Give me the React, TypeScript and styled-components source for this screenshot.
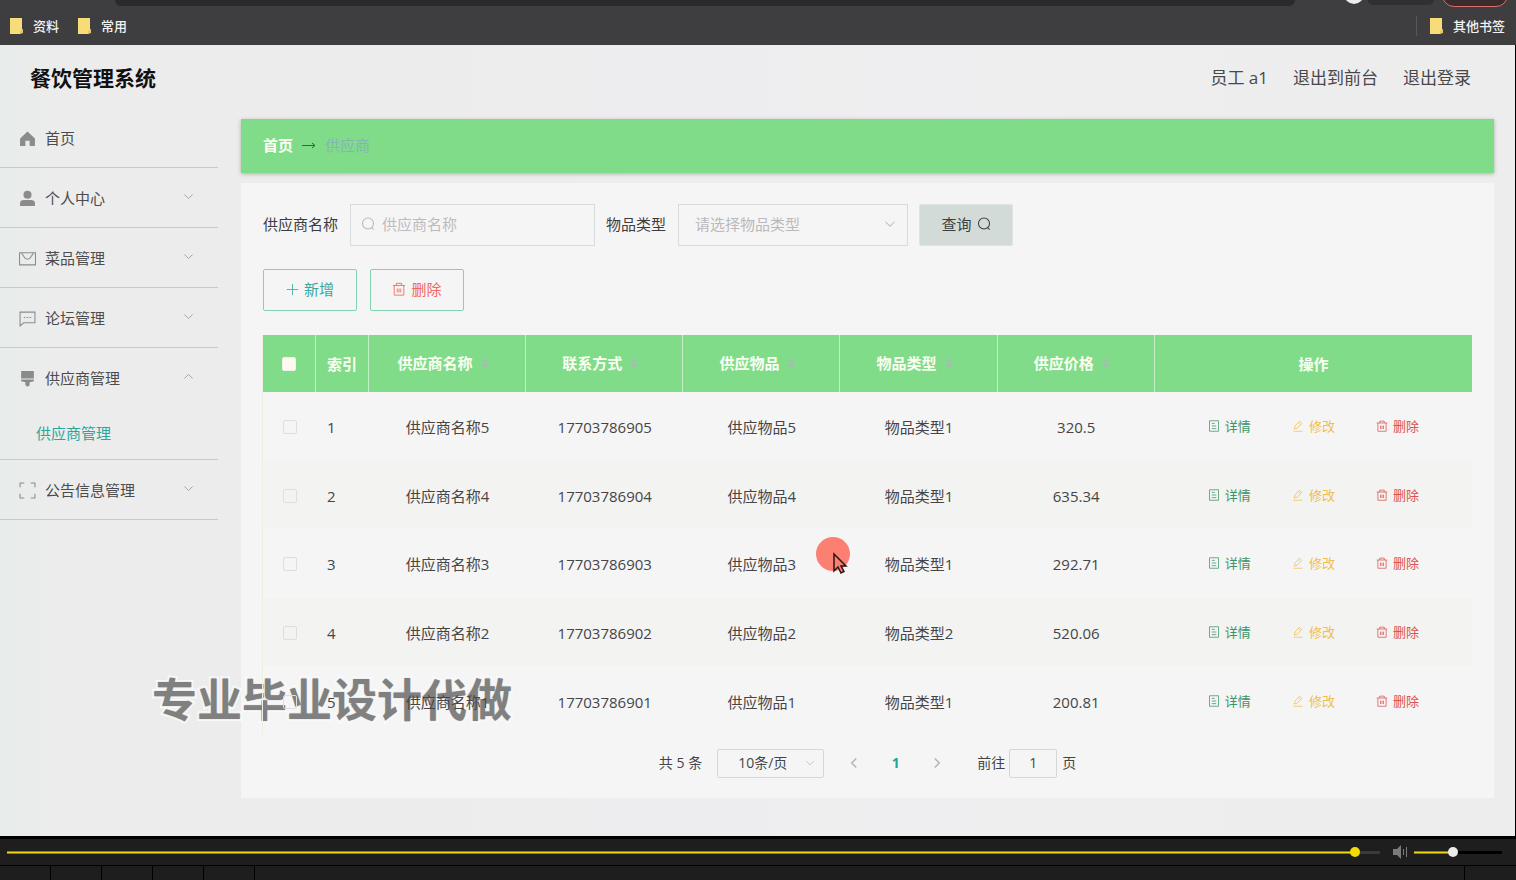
import React, { useState } from "react";
import styled, { createGlobalStyle, css } from "styled-components";

const GlobalStyle = createGlobalStyle`
  *, *::before, *::after { box-sizing: border-box; }
  body {
    margin: 0;
    background: #1e1e1e;
    color: #454547;
    font-family: "Open Sans", "Noto Sans CJK SC", sans-serif;
    font-size: 15px;
    line-height: 20px;
  }
  button, input, select { font: inherit; color: inherit; margin: 0; }
  a { color: inherit; text-decoration: none; }
`;

const Window = styled.div`
  display: flex;
  flex-direction: column;
  min-height: 100vh;
  overflow: hidden;
`;

/* browser chrome */
const TabStrip = styled.div`
  display: flex;
  align-items: flex-start;
  height: 8px;
  padding: 0 8px 0 115px;
  overflow: hidden;
  background: #3e3e40;
`;

const AddressBar = styled.div`
  flex: 1;
  height: 6px;
  border-radius: 0 0 8px 8px;
  background: #2a2a2b;
`;

const Avatar = styled.div`
  width: 20px;
  height: 20px;
  margin: -16px 4px 0 49px;
  border-radius: 50%;
  background: #ececec;
`;

const ProfileBar = styled.div`
  width: 66px;
  height: 5px;
  margin-right: 8px;
  border-radius: 0 0 8px 8px;
  background: #303032;
`;

const UpdatePill = styled.div`
  width: 66px;
  height: 24px;
  margin-top: -17px;
  border: 1px solid #d9706c;
  border-radius: 12px;
  background: #3a2c2d;
`;

const Bookmarks = styled.nav`
  display: flex;
  align-items: center;
  gap: 19px;
  height: 37px;
  padding: 0 11px 2px 10px;
  background: #3e3e40;
  color: #f2f2f2;
  font-size: 13px;
  font-weight: 500;
`;

const Bookmark = styled.a<{ $last?: boolean }>`
  display: flex;
  align-items: center;
  gap: 10px;
  ${(p) =>
    p.$last &&
    css`
      margin-left: auto;
      padding-left: 13px;
      border-left: 1px solid #57575a;
    `}
`;

/* application */
const Page = styled.div`
  flex: 1;
  border-right: 1px solid #000;
  background: linear-gradient(90deg, #e8eceb, #ececec 60px, #eeedef 60%, #ededee);
`;

const Header = styled.header`
  display: flex;
  align-items: center;
  justify-content: space-between;
  height: 63px;
  padding: 3px 44px 0 30px;
`;

const Title = styled.h1`
  margin: 0;
  color: #111;
  font-size: 21px;
  line-height: 28px;
  font-weight: 700;
`;

const HeaderLinks = styled.div`
  display: flex;
  gap: 25px;
  color: #48484a;
  font-size: 17px;
  line-height: 24px;
`;

const Columns = styled.div`
  display: flex;
  align-items: flex-start;
`;

const Sidebar = styled.nav`
  flex: none;
  width: 218px;
`;

const MenuGroup = styled.div`
  border-bottom: 1px solid #c9c9ca;
`;

const MenuItem = styled.button`
  display: flex;
  align-items: center;
  width: 100%;
  height: 59px;
  padding: 2px 24px 0 19px;
  border: 0;
  background: none;
  text-align: left;
  gap: 9px;
  color: #4c4c4e;
  svg:first-child { color: #8b8b8c; }
  svg:last-child { margin-bottom: 4px; color: #a3a3a5; }
`;

const MenuLabel = styled.span`
  flex: 1;
  padding-bottom: 2px;
`;

const SubItem = styled.a`
  display: flex;
  align-items: center;
  height: 52px;
  padding-left: 36px;
  color: #2aa79b;
`;

const Main = styled.main`
  flex: 1;
  min-width: 0;
  padding: 11px 21px 38px 23px;
`;

const Breadcrumb = styled.div`
  display: flex;
  align-items: center;
  gap: 9px;
  height: 54px;
  padding: 0 22px 2px;
  background: #81dc8a;
  box-shadow: 0 1px 4px #a8b4a8;
  color: #2e6b3c;
`;

const CrumbHome = styled.a`
  color: #fbfff2;
  font-weight: 700;
`;

const CrumbCurrent = styled.span`
  color: #80b7b4;
`;

const Panel = styled.section`
  position: relative;
  isolation: isolate;
  margin-top: 10px;
  padding: 21px 22px 20px;
  background: #f6f5f6;
`;

const Watermark = styled.div`
  position: absolute;
  z-index: -1;
  left: -89px;
  bottom: 65px;
  color: #808080;
  font-size: 45px;
  line-height: 66px;
  font-weight: 700;
  white-space: nowrap;
  -webkit-text-stroke: 4px #fbfbfb;
  paint-order: stroke fill;
  text-shadow: 0 0 2px #c8c8c8;
`;

const Toolbar = styled.div`
  display: flex;
  align-items: center;
  color: #3c3c3e;
`;

const FieldLabel = styled.label`
  margin-right: 12px;
  padding-bottom: 2px;
  white-space: nowrap;
`;

const Field = styled.div<{ $width: number }>`
  display: flex;
  align-items: center;
  gap: 7px;
  width: ${(p) => p.$width}px;
  height: 42px;
  margin-right: 11px;
  padding: 0 11px 2px 10px;
  border: 1px solid #d9dadb;
  color: #b9b9bc;
`;

const TextInput = styled.input`
  flex: 1;
  min-width: 0;
  padding: 0;
  border: 0;
  outline: 0;
  background: none;
  &::placeholder { color: #bcbcbe; opacity: 1; }
`;

const Select = styled.select`
  flex: 1;
  min-width: 0;
  padding: 0 0 0 6px;
  border: 0;
  outline: 0;
  appearance: none;
  background: none;
`;

const Button = styled.button<{ $kind: "query" | "add" | "remove" }>`
  display: flex;
  align-items: center;
  justify-content: center;
  gap: 5px;
  width: 94px;
  height: 42px;
  padding: 0 0 2px;
  border: 1px solid ${(p) => (p.$kind === "query" ? "#dfe5e4" : "#84d3b0")};
  border-radius: 2px;
  background: ${(p) => (p.$kind === "query" ? "#d3dbd9" : "transparent")};
  color: ${(p) => ({ query: "#3b3f3f", add: "#33a99f", remove: "#ee6a5e" })[p.$kind]};
`;

const Actions = styled.div`
  display: flex;
  gap: 13px;
  margin: 23px 0 24px;
`;

const Table = styled.table`
  width: 100%;
  height: 400px;
  table-layout: fixed;
  border-collapse: separate;
  border-spacing: 0;
  box-shadow: -1px 0 #ebefe4;
`;

const HeadCell = styled.th<{ $left?: boolean }>`
  height: 57px;
  padding: ${(p) => (p.$left ? "0 0 0 11px" : "0")};
  border-right: 1px solid #c3efc4;
  background: #81dc8a;
  color: #fbfff2;
  font-weight: 700;
  text-align: ${(p) => (p.$left ? "left" : "center")};
  &:last-child { border-right: 0; }
`;

const SortButton = styled.button`
  display: inline-flex;
  align-items: center;
  padding: 0 0 2px;
  border: 0;
  background: none;
  font-weight: 700;
  svg { width: 24px; color: #a9b9b4; }
`;

const Row = styled.tr`
  &:nth-child(even) { background: rgba(238, 240, 236, 0.35); }
`;

const Cell = styled.td<{ $left?: boolean }>`
  padding: ${(p) => (p.$left ? "2px 0 0 11px" : "2px 0 0")};
  text-align: ${(p) => (p.$left ? "left" : "center")};
`;

const Tick = styled.input<{ $head?: boolean }>`
  display: block;
  width: 14px;
  height: 14px;
  margin: 0 auto;
  appearance: none;
  border: 1px solid ${(p) => (p.$head ? "#f3eef0" : "#dededf")};
  border-radius: 2px;
  background: ${(p) => (p.$head ? "#fffaf0" : "transparent")};
`;

const RowActions = styled.div`
  display: flex;
  justify-content: center;
  gap: 41px;
  padding-bottom: 2px;
`;

const RowButton = styled.button<{ $color: string }>`
  display: flex;
  align-items: center;
  gap: 5px;
  padding: 0;
  border: 0;
  background: none;
  color: ${(p) => p.$color};
  font-size: 13px;
  white-space: nowrap;
`;

const Pagination = styled.div`
  display: flex;
  align-items: center;
  justify-content: center;
  margin-top: 14px;
  font-size: 14px;
  > span, > label { padding-bottom: 2px; }
`;

const PageSize = styled.div`
  display: flex;
  align-items: center;
  width: 107px;
  height: 29px;
  margin: 0 20px 0 15px;
  padding: 0 8px 2px 14px;
  border: 1px solid #d7d7d9;
  border-radius: 2px;
  svg { color: #bdbdbf; }
`;

const PageButton = styled.button<{ $current?: boolean }>`
  display: flex;
  align-items: center;
  justify-content: center;
  width: 41px;
  height: 28px;
  padding: 0 0 2px;
  border: 0;
  background: none;
  color: ${(p) => (p.$current ? "#1fa698" : "#b4b4b6")};
  font-weight: 700;
  &:first-of-type, &:last-of-type { width: 20px; }
  &:first-of-type { margin-right: 11px; }
  &:last-of-type { margin: 0 30px 0 11px; }
`;

const JumpInput = styled.input`
  width: 48px;
  height: 29px;
  margin: 0 5px 0 4px;
  padding: 0 0 2px;
  border: 1px solid #d7d7d9;
  border-radius: 2px;
  outline: 0;
  background: none;
  text-align: center;
`;

const Pointer = styled.div`
  position: absolute;
  left: 575px;
  top: 354px;
  width: 34px;
  height: 40px;
`;

/* video player */
const Player = styled.div`
  display: flex;
  align-items: center;
  height: 30px;
  padding: 0 14px 0 7px;
  border-top: 3px solid #000;
  border-bottom: 1px solid #000;
  background: #1e1e1e;
  color: #7a7a7a;
  svg { margin: 0 6px 0 13px; }
`;

const Slider = styled.input<{ $fill: number; $width?: number; $thumb: string; $rest: string }>`
  flex: ${(p) => (p.$width ? "none" : "1")};
  width: ${(p) => (p.$width ? `${p.$width}px` : "auto")};
  min-width: 0;
  height: 10px;
  appearance: none;
  background:
    linear-gradient(90deg, #f0d90a ${(p) => p.$fill}%, transparent 0) center / 100% 1px no-repeat,
    linear-gradient(90deg, #8f8208 ${(p) => p.$fill}%, ${(p) => p.$rest} 0) center / 100% 3px no-repeat;
  &::-webkit-slider-thumb {
    appearance: none;
    width: 10px;
    height: 10px;
    border-radius: 50%;
    background: ${(p) => p.$thumb};
  }
`;

const Footer = styled.div`
  display: flex;
  height: 14px;
  background: #1e1e1e;
`;

const FooterCell = styled.div<{ $end?: boolean }>`
  width: ${(p) => (p.$end ? 52 : 51)}px;
  border-right: ${(p) => (p.$end ? "0" : "1px solid #000")};
  border-left: ${(p) => (p.$end ? "1px solid #000" : "0")};
  margin-left: ${(p) => (p.$end ? "auto" : "0")};
`;

const PATHS: Record<string, React.ReactNode> = {
  home: <path d="M1 8 8 1.5 15 8v7h-5v-5H6v5H1z" fill="currentColor" stroke="none" />,
  user: (
    <g fill="currentColor" stroke="none">
      <circle cx="8" cy="4.5" r="3.8" />
      <path d="M1 15v-2.500q0-3 4-3h6q4 0 4 3V15z" />
    </g>
  ),
  mail: <path d="M.5 2.500h15v11.500H.5zM2.500 3l3 4.500q2.500 2.500 5 0L13.500 3" />,
  chat: <path d="M1 2h14v10H4.500L1 15zM4.500 7h1.500M7.300 7h1.500M10 7h1.500" />,
  brush: (
    <g fill="currentColor" stroke="none">
      <path d="M2 1h12v7H2zM2 9h12v1.500l-4 1V14q-2 3-4 0v-2.500l-4-1z" />
    </g>
  ),
  frame: <path d="M1 5V1h4M11 1h4v4M15 11v4h-4M5 15H1v-4" />,
  down: <path d="m2 5 6 6 6-6" />,
  up: <path d="m2 11 6-6 6 6" />,
  left: <path d="m11 2-6 6 6 6" />,
  right: <path d="m5 2 6 6-6 6" />,
  search: (
    <>
      <circle cx="8" cy="7.500" r="6.300" />
      <path d="m12 12 2.500 2.500" />
    </>
  ),
  plus: <path d="M8 1v14M1 8h14" />,
  trash: <path d="M1 4h14M5 4V1.500h6V4M2.500 4v11h11V4M6 7.500v4.500M8 7.500v4.500M10 7.500v4.500" />,
  doc: <path d="M2 1h12v14H2zM5 4.500h4M5 8h6M5 11.500h6" />,
  edit: <path d="M2 15h12M3 12l1-4 6-6.500 3 3L7 11zM8.500 3.500l2.500 2.500" />,
  sort: <path d="M8 1 13 6.500H3zM8 15 13 9.500H3z" fill="currentColor" stroke="none" />,
};

function Icon({ name, size, stroke = 1 }: { name: string; size: number; stroke?: number }) {
  return (
    <svg
      width={size}
      height={size}
      viewBox="0 0 16 16"
      fill="none"
      stroke="currentColor"
      strokeWidth={stroke}
      aria-hidden="true"
    >
      {PATHS[name]}
    </svg>
  );
}

function FolderIcon() {
  return (
    <svg width="13" height="16" viewBox="0 0 13 16" aria-hidden="true">
      <path d="M0 0h12v11l1 1v3h-2l-1 1H0z" fill="#f7dc78" />
      <path d="M10 16v-3l3-2v4z" fill="#e8c75c" />
    </svg>
  );
}

const MENU = [
  { icon: "home", label: "首页" },
  { icon: "user", label: "个人中心", arrow: "down" },
  { icon: "mail", label: "菜品管理", arrow: "down" },
  { icon: "chat", label: "论坛管理", arrow: "down" },
  { icon: "brush", label: "供应商管理", arrow: "up", child: "供应商管理" },
  { icon: "frame", label: "公告信息管理", arrow: "down" },
];

const SORTABLE = ["供应商名称", "联系方式", "供应物品", "物品类型", "供应价格"];

const ROWS = [
  ["供应商名称5", "17703786905", "供应物品5", "物品类型1", "320.5"],
  ["供应商名称4", "17703786904", "供应物品4", "物品类型1", "635.34"],
  ["供应商名称3", "17703786903", "供应物品3", "物品类型1", "292.71"],
  ["供应商名称2", "17703786902", "供应物品2", "物品类型2", "520.06"],
  ["供应商名称1", "17703786901", "供应物品1", "物品类型1", "200.81"],
];

export default function App() {
  const [progress, setProgress] = useState(985);
  const [volume, setVolume] = useState(44);

  return (
    <Window>
      <GlobalStyle />
      <TabStrip>
        <AddressBar />
        <Avatar />
        <ProfileBar />
        <UpdatePill />
      </TabStrip>
      <Bookmarks>
        <Bookmark href="#"><FolderIcon />资料</Bookmark>
        <Bookmark href="#"><FolderIcon />常用</Bookmark>
        <Bookmark href="#" $last><FolderIcon />其他书签</Bookmark>
      </Bookmarks>

      <Page>
        <Header>
          <Title>餐饮管理系统</Title>
          <HeaderLinks>
            <span>员工 a1</span>
            <a href="#">退出到前台</a>
            <a href="#">退出登录</a>
          </HeaderLinks>
        </Header>

        <Columns>
          <Sidebar>
            {MENU.map((item) => (
              <MenuGroup key={item.label}>
                <MenuItem>
                  <Icon name={item.icon} size={17} />
                  <MenuLabel>{item.label}</MenuLabel>
                  {item.arrow && <Icon name={item.arrow} size={11} stroke={1.4} />}
                </MenuItem>
                {item.child && <SubItem href="#">{item.child}</SubItem>}
              </MenuGroup>
            ))}
          </Sidebar>

          <Main>
            <Breadcrumb>
              <CrumbHome href="#">首页</CrumbHome>
              <svg width="14" height="10" viewBox="0 0 14 10" fill="none" stroke="currentColor" aria-hidden="true">
                <path d="M0 5.500h13M10 3l3 2.500L10 8" />
              </svg>
              <CrumbCurrent>供应商</CrumbCurrent>
            </Breadcrumb>

            <Panel>
              <Toolbar>
                <FieldLabel htmlFor="supplier">供应商名称</FieldLabel>
                <Field $width={245}>
                  <Icon name="search" size={14} stroke={1.2} />
                  <TextInput id="supplier" placeholder="供应商名称" />
                </Field>
                <FieldLabel htmlFor="kind">物品类型</FieldLabel>
                <Field $width={230}>
                  <Select id="kind" defaultValue="">
                    <option value="">请选择物品类型</option>
                    <option>物品类型1</option>
                    <option>物品类型2</option>
                  </Select>
                  <Icon name="down" size={12} stroke={1.4} />
                </Field>
                <Button $kind="query">查询<Icon name="search" size={14} stroke={1.2} /></Button>
              </Toolbar>

              <Actions>
                <Button $kind="add"><Icon name="plus" size={13} />新增</Button>
                <Button $kind="remove"><Icon name="trash" size={14} />删除</Button>
              </Actions>

              <Table>
                <colgroup>
                  <col style={{ width: 53 }} />
                  <col style={{ width: 53 }} />
                  {SORTABLE.map((name) => <col key={name} style={{ width: "13%" }} />)}
                  <col />
                </colgroup>
                <thead>
                  <tr>
                    <HeadCell><Tick $head type="checkbox" aria-label="全选" /></HeadCell>
                    <HeadCell $left>索引</HeadCell>
                    {SORTABLE.map((name) => (
                      <HeadCell key={name}>
                        <SortButton>{name}<Icon name="sort" size={12} /></SortButton>
                      </HeadCell>
                    ))}
                    <HeadCell>操作</HeadCell>
                  </tr>
                </thead>
                <tbody>
                  {ROWS.map((row, i) => (
                    <Row key={row[1]}>
                      <Cell><Tick type="checkbox" aria-label={row[0]} /></Cell>
                      <Cell $left>{i + 1}</Cell>
                      {row.map((value) => <Cell key={value}>{value}</Cell>)}
                      <Cell>
                        <RowActions>
                          <RowButton $color="#3d9467"><Icon name="doc" size={12} />详情</RowButton>
                          <RowButton $color="#f0be4e"><Icon name="edit" size={12} />修改</RowButton>
                          <RowButton $color="#d9534f"><Icon name="trash" size={12} />删除</RowButton>
                        </RowActions>
                      </Cell>
                    </Row>
                  ))}
                </tbody>
              </Table>

              <Pagination>
                <span>共 5 条</span>
                <PageSize>
                  <Select aria-label="每页条数" defaultValue="10">
                    <option value="10">10条/页</option>
                    <option value="20">20条/页</option>
                  </Select>
                  <Icon name="down" size={10} stroke={1.4} />
                </PageSize>
                <PageButton aria-label="上一页"><Icon name="left" size={12} stroke={2} /></PageButton>
                <PageButton $current>1</PageButton>
                <PageButton aria-label="下一页"><Icon name="right" size={12} stroke={2} /></PageButton>
                <label htmlFor="jump">前往</label>
                <JumpInput id="jump" defaultValue="1" />
                <span>页</span>
              </Pagination>

              <Watermark>专业毕业设计代做</Watermark>
              <Pointer>
                <svg width="34" height="40" viewBox="0 0 34 40" aria-hidden="true">
                  <circle cx="17" cy="17" r="17" fill="#fb8072" />
                  <path
                    d="M18 17v17l4-4 3 6 3-1.500-3-5.500h5z"
                    fill="#fb8072"
                    stroke="#2b1614"
                    strokeWidth="1.500"
                  />
                </svg>
              </Pointer>
            </Panel>
          </Main>
        </Columns>
      </Page>

      <Player>
        <Slider
          type="range"
          aria-label="播放进度"
          max={1000}
          value={progress}
          onChange={(e) => setProgress(Number(e.target.value))}
          $fill={progress / 10}
          $thumb="#f3dc00"
          $rest="#3a3a3a"
        />
        <svg width="15" height="14" viewBox="0 0 15 14" aria-hidden="true">
          <path d="M0 4h4l4-4v14l-4-4H0z" fill="currentColor" />
          <path d="M10.500 4v6M13.500 2v10" stroke="currentColor" />
        </svg>
        <Slider
          type="range"
          aria-label="音量"
          value={volume}
          onChange={(e) => setVolume(Number(e.target.value))}
          $fill={volume}
          $width={88}
          $thumb="#ececec"
          $rest="#000"
        />
      </Player>
      <Footer>
        {[0, 1, 2, 3, 4].map((n) => <FooterCell key={n} />)}
        <FooterCell $end />
      </Footer>
    </Window>
  );
}
